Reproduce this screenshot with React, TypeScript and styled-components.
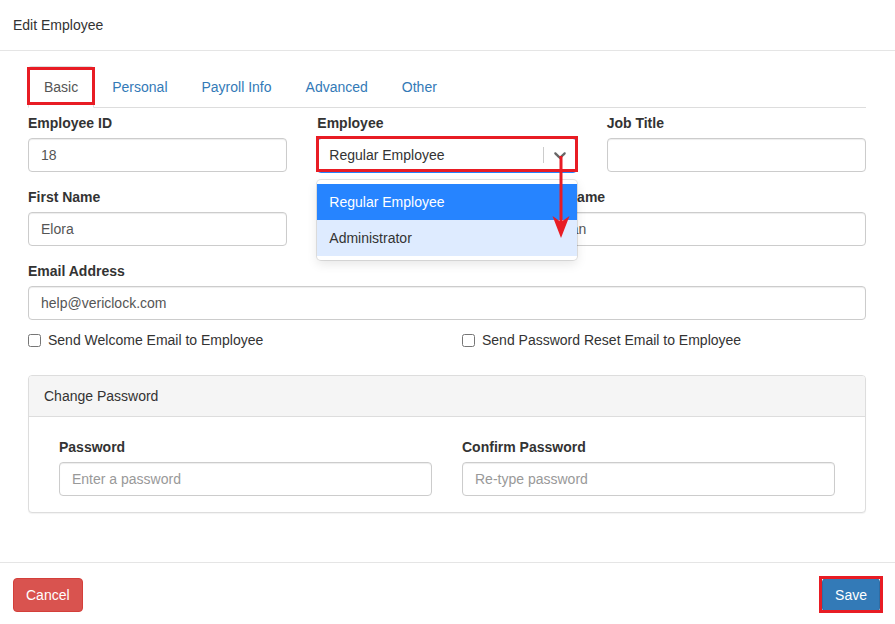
import styled, { createGlobalStyle, css } from 'styled-components'

const GlobalStyle = createGlobalStyle`
  html, body {
    margin: 0;
    padding: 0;
    background: #fff;
  }
  body {
    font-family: "Liberation Sans", Arial, Helvetica, sans-serif;
    font-size: 14px;
    line-height: 20px;
    color: #333;
  }
  * {
    box-sizing: border-box;
  }
`

const RED = '#e81c24'

const Modal = styled.div`
  display: flex;
  flex-direction: column;
  height: 100vh;
  background: #fff;
`

const Header = styled.div`
  height: 51px;
  padding: 0 13px;
  display: flex;
  align-items: center;
  border-bottom: 1px solid #e5e5e5;
`

const Title = styled.h4`
  margin: 0;
  font-size: 14px;
  font-weight: normal;
  color: #333;
`

const Body = styled.div`
  flex: 1;
  padding: 15px 29px 0 28px;
`

const TabNav = styled.ul`
  display: flex;
  margin: 0;
  padding: 0;
  list-style: none;
  border-bottom: 1px solid #ddd;
`

const TabItem = styled.li<{ $active?: boolean }>`
  position: relative;
  margin-right: 2px;
  margin-bottom: -1px;
  padding: 10px 15px;
  line-height: 20px;
  border: 1px solid transparent;
  border-radius: 4px 4px 0 0;
  color: #337ab7;
  cursor: pointer;

  ${p =>
    p.$active &&
    css`
      color: #555;
      background: #fff;
      border-color: #ddd #ddd transparent;
    `}
`

// red highlight frames laid over a control
const Highlight = styled.span<{ $top?: number; $bottom?: number; $side?: number }>`
  position: absolute;
  top: ${p => p.$top ?? 0}px;
  bottom: ${p => p.$bottom ?? 0}px;
  left: ${p => p.$side ?? 0}px;
  right: ${p => p.$side ?? 0}px;
  border: 3px solid ${RED};
  pointer-events: none;
  z-index: 3;
`

const FormGrid = styled.div<{ $tight?: boolean }>`
  display: grid;
  grid-template-columns: repeat(12, 1fr);
  column-gap: 30px;
  margin-top: ${p => (p.$tight ? -15 : 5)}px;
`

const Field = styled.div<{ $span: number; $start?: number }>`
  grid-column: ${p => (p.$start ? `${p.$start} / ` : '')}span ${p => p.$span};
  margin-bottom: 15px;
  min-width: 0;
`

const Label = styled.label`
  display: block;
  margin-bottom: 5px;
  font-weight: bold;
  line-height: 20px;
  color: #333;
`

const Input = styled.input`
  display: block;
  width: 100%;
  height: 34px;
  padding: 6px 12px;
  font: inherit;
  color: #555;
  background: #fff;
  border: 1px solid #ccc;
  border-radius: 4px;
  box-shadow: inset 0 1px 1px rgba(0, 0, 0, 0.075);
  outline: none;

  &::placeholder {
    color: #999;
  }
`

/* react-select look-alike, shown open */
const SelectBox = styled.div`
  position: relative;
`

const Control = styled.div`
  display: flex;
  align-items: center;
  height: 34px;
  border: 1px solid #2684ff;
  border-radius: 4px;
  box-shadow: 0 0 0 1px #2684ff;
  background: #fff;
`

const SingleValue = styled.div`
  flex: 1;
  padding: 0 11px;
  color: #333;
  white-space: nowrap;
`

const Separator = styled.span`
  align-self: stretch;
  width: 1px;
  margin: 8px 0;
  background: #ccc;
`

const Indicator = styled.div`
  display: flex;
  align-items: center;
  padding: 0 6px;
  color: #666;
`

const Menu = styled.div`
  position: absolute;
  top: calc(100% + 8px);
  left: 0;
  right: 0;
  padding: 4px 0;
  background: #fff;
  border-radius: 4px;
  box-shadow: 0 0 0 1px hsla(0, 0%, 0%, 0.1), 0 4px 11px hsla(0, 0%, 0%, 0.1);
  z-index: 2;
`

const Option = styled.div<{ $selected?: boolean }>`
  padding: 8px 12px;
  line-height: 20px;
  color: ${p => (p.$selected ? '#fff' : '#333')};
  background: ${p => (p.$selected ? '#2684ff' : '#deebff')};
`

const PointerArrow = styled.svg`
  position: absolute;
  left: 234px;
  top: 12px;
  z-index: 4;
  overflow: visible;
`

const CheckRow = styled.div`
  grid-column: span 6;
  margin: 10px 0 25px;
`

const CheckLabel = styled.label`
  display: flex;
  align-items: center;
  gap: 7px;
  line-height: 20px;
  color: #333;

  input {
    width: 13px;
    height: 13px;
    margin: 0;
  }
`

const Panel = styled.div`
  border: 1px solid #ddd;
  border-radius: 4px;
  box-shadow: 0 1px 1px rgba(0, 0, 0, 0.05);
  background: #fff;
`

const PanelHeading = styled.div`
  padding: 10px 15px;
  line-height: 20px;
  background: #f5f5f5;
  border-bottom: 1px solid #ddd;
  border-radius: 3px 3px 0 0;
  color: #333;
`

const PanelBody = styled.div`
  display: grid;
  grid-template-columns: 1fr 1fr;
  column-gap: 30px;
  padding: 20px 30px 16px;
`

const Footer = styled.div`
  display: flex;
  justify-content: space-between;
  align-items: flex-start;
  padding: 15px 15px 12px 13px;
  border-top: 1px solid #e5e5e5;
`

const ButtonSlot = styled.span`
  position: relative;
  display: inline-flex;
`

const Button = styled.button<{ $variant: 'danger' | 'primary' }>`
  height: 34px;
  padding: 6px 12px;
  font: inherit;
  line-height: 20px;
  color: #fff;
  border: 1px solid;
  border-radius: 4px;
  cursor: pointer;

  ${p =>
    p.$variant === 'danger'
      ? css`
          background: #d9534f;
          border-color: #d43f3a;
        `
      : css`
          background: #337ab7;
          border-color: #2e6da4;
        `}
`

const ChevronDown = () => (
  <svg width="20" height="20" viewBox="0 0 20 20" fill="currentColor" aria-hidden="true">
    <path d="M4.516 7.548c0.436-0.446 1.043-0.481 1.576 0l3.908 3.747 3.908-3.747c0.533-0.481 1.141-0.446 1.574 0 0.436 0.445 0.408 1.197 0 1.615-0.406 0.418-4.695 4.502-4.695 4.502-0.217 0.223-0.502 0.335-0.787 0.335s-0.57-0.112-0.789-0.335c0 0-4.287-4.084-4.695-4.502s-0.436-1.17 0-1.615z" />
  </svg>
)

const tabs = ['Basic', 'Personal', 'Payroll Info', 'Advanced', 'Other']

const App = () => (
  <Modal>
    <GlobalStyle />
    <Header>
      <Title>Edit Employee</Title>
    </Header>

    <Body>
      <TabNav>
        {tabs.map((t, i) => (
          <TabItem key={t} $active={i === 0}>
            {t}
            {i === 0 && <Highlight $top={0} $bottom={2} $side={-2} />}
          </TabItem>
        ))}
      </TabNav>

      <FormGrid>
        <Field $span={4}>
          <Label>Employee ID</Label>
          <Input defaultValue="18" />
        </Field>
        <Field $span={4}>
          <Label>Employee</Label>
          <SelectBox>
            <Control>
              <SingleValue>Regular Employee</SingleValue>
              <Separator />
              <Indicator>
                <ChevronDown />
              </Indicator>
            </Control>
            <Highlight $top={-2} $bottom={0} $side={-1} />
            <Menu>
              <Option $selected>Regular Employee</Option>
              <Option>Administrator</Option>
            </Menu>
            <PointerArrow width="20" height="90" viewBox="0 0 20 90">
              <line x1="10" y1="6" x2="10" y2="74" stroke={RED} strokeWidth="3" />
              <polygon points="10,88 1.5,66 10,72 18.5,66" fill={RED} />
            </PointerArrow>
          </SelectBox>
        </Field>
        <Field $span={4}>
          <Label>Job Title</Label>
          <Input />
        </Field>

        <Field $span={4}>
          <Label>First Name</Label>
          <Input defaultValue="Elora" />
        </Field>
        <Field $span={5} $start={8}>
          <Label>Last Name</Label>
          <Input defaultValue="Logan" />
        </Field>

        <Field $span={12}>
          <Label>Email Address</Label>
          <Input defaultValue="help@vericlock.com" />
        </Field>
      </FormGrid>

      <FormGrid $tight>
        <CheckRow>
          <CheckLabel>
            <input type="checkbox" />
            Send Welcome Email to Employee
          </CheckLabel>
        </CheckRow>
        <CheckRow>
          <CheckLabel>
            <input type="checkbox" />
            Send Password Reset Email to Employee
          </CheckLabel>
        </CheckRow>
      </FormGrid>

      <Panel>
        <PanelHeading>Change Password</PanelHeading>
        <PanelBody>
          <div>
            <Label>Password</Label>
            <Input type="password" placeholder="Enter a password" />
          </div>
          <div>
            <Label>Confirm Password</Label>
            <Input type="password" placeholder="Re-type password" />
          </div>
        </PanelBody>
      </Panel>
    </Body>

    <Footer>
      <Button $variant="danger">Cancel</Button>
      <ButtonSlot>
        <Button $variant="primary">Save</Button>
        <Highlight $top={-2} $bottom={-1} $side={-3} />
      </ButtonSlot>
    </Footer>
  </Modal>
)

export default App
